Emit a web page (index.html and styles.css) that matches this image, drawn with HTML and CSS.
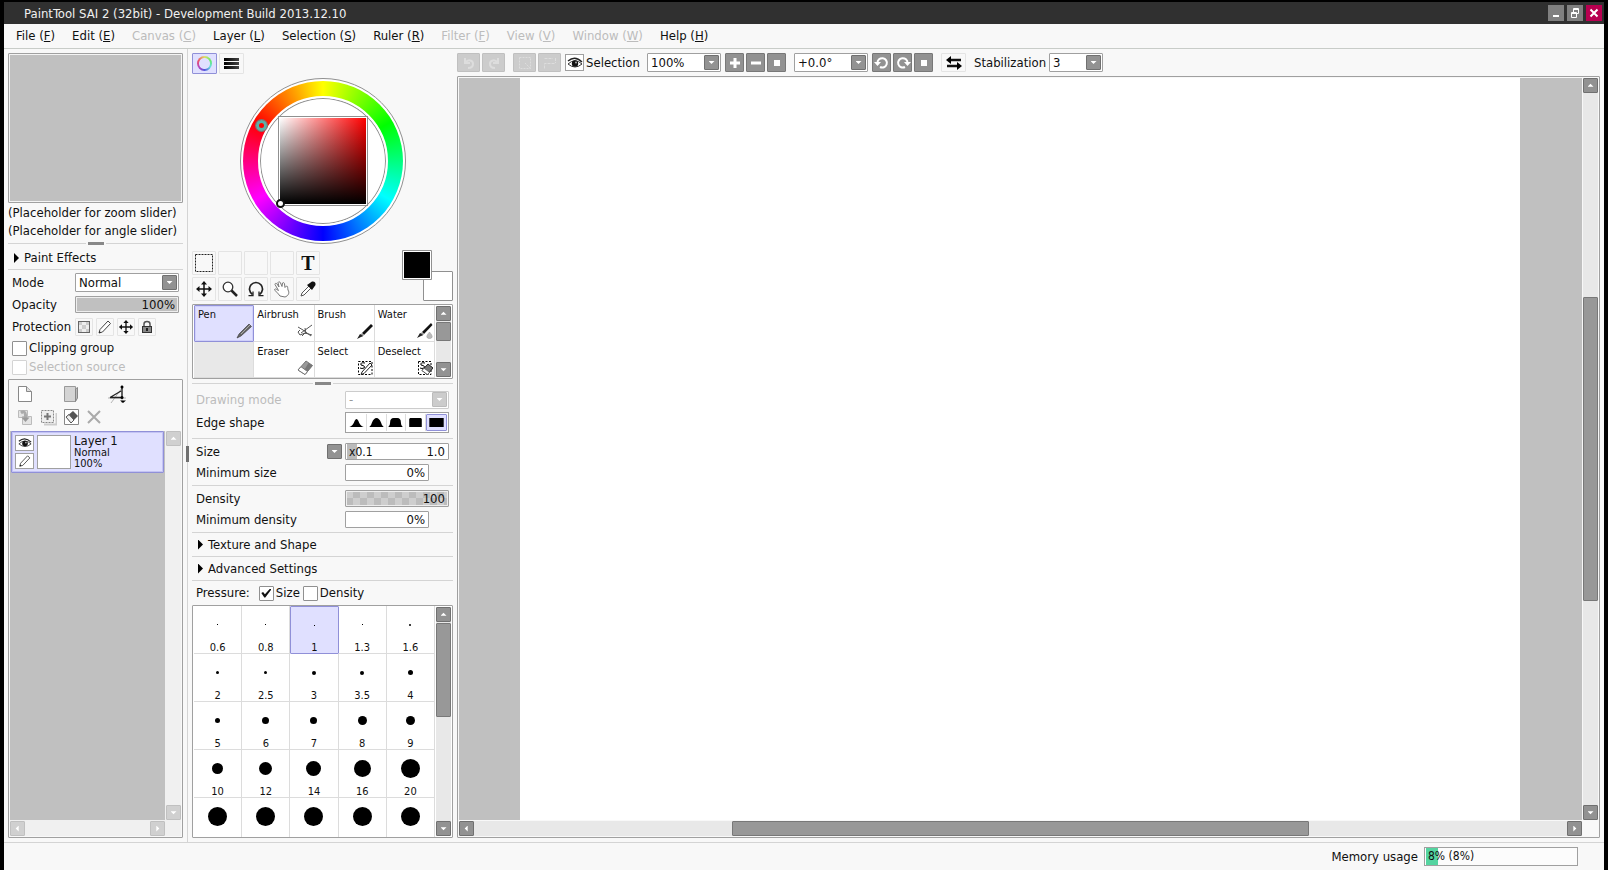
FILE: index.html
```html
<!DOCTYPE html>
<html lang="en">
<head>
<meta charset="utf-8">
<title>PaintTool SAI 2 (32bit) - Development Build 2013.12.10</title>
<link rel="stylesheet" href="styles.css">
</head>
<body>
<svg class="defs" aria-hidden="true">
  <symbol id="eye" viewBox="0 0 16 16"><path d="M1 6Q8 0 15 7" fill="none" stroke="#222" stroke-width="1.4"/><path d="M1 9Q8 2.500 15 9Q8 15 1 9Z" fill="#fff" stroke="#333"/><circle cx="8" cy="8.500" r="3.200" fill="#111"/><circle cx="9" cy="7.500" r="1" fill="#aaa"/></symbol>
  <symbol id="pencil" viewBox="0 0 16 16"><path d="M2 14L3 10.500L11 2L13.500 4.500L5.500 13Z" fill="#fff" stroke="#444"/><path d="M2 14L2.600 12L4 13.400Z" fill="#222"/></symbol>
  <symbol id="move" viewBox="0 0 18 18"><path d="M9 3V15M3 9H15" fill="none" stroke="currentColor" stroke-width="1.500"/><path d="M9 1L12 4.500H6ZM9 17L12 13.500H6ZM1 9L4.500 6V12ZM17 9L13.500 6V12Z" fill="currentColor"/></symbol>
  <symbol id="eraser" viewBox="0 0 16 16"><path d="M1 10L9 1L15.500 5.500L8 14.500Z" fill="#999" stroke="#777"/><path d="M11.500 3L15.500 5.500L8 14.500L5.500 12.800Z" fill="#777"/><path d="M1 10L4 6.700L10.500 11.500L8 14.500Z" fill="#fff" stroke="#777"/></symbol>
</svg>
<div class="window">
  <header class="titlebar">
    <h1 class="title">PaintTool SAI 2 (32bit) - Development Build 2013.12.10</h1>
    <button class="win-btn" aria-label="Minimize"><svg viewBox="0 0 16 16"><path d="M5 11H11" stroke="#fff" stroke-width="2"/></svg></button>
    <button class="win-btn" aria-label="Restore"><svg viewBox="0 0 16 16" fill="none" stroke="#fff"><path d="M6.500 7V3.500H11.500V8.500H9M6 4.500H12M4.500 7.500H9.500V12.500H4.500ZM4 8.500H10"/></svg></button>
    <button class="win-btn win-close" aria-label="Close"><svg viewBox="0 0 16 16"><path d="M4.500 4.500L11.500 11.500M11.500 4.500L4.500 11.500" stroke="#fff" stroke-width="2"/></svg></button>
  </header>
  <nav class="menubar">
    <button>File (<u>F</u>)</button><button>Edit (<u>E</u>)</button><button disabled>Canvas (<u>C</u>)</button><button>Layer (<u>L</u>)</button><button>Selection (<u>S</u>)</button><button>Ruler (<u>R</u>)</button><button disabled>Filter (<u>F</u>)</button><button disabled>View (<u>V</u>)</button><button disabled>Window (<u>W</u>)</button><button>Help (<u>H</u>)</button>
  </nav>

  <main class="workspace">
    <aside class="layers-col">
      <div class="navigator"></div>
      <p class="slot">(Placeholder for zoom slider)</p>
      <p class="slot">(Placeholder for angle slider)</p>
      <div class="splitter"><i class="grip"></i></div>
      <button class="fold"><i class="tri"></i>Paint Effects</button>
      <div class="layer-props">
        <div class="prop">
          <label class="prop-label" for="mode">Mode</label>
          <span class="combo grow"><select id="mode"><option>Normal</option></select><i class="arrow"></i></span>
        </div>
        <div class="prop">
          <label class="prop-label" for="opacity">Opacity</label>
          <input id="opacity" class="field filled grow" value="100%">
        </div>
        <div class="prop protection">
          <span class="prop-label">Protection</span>
          <span class="protect">
            <button class="tile" aria-label="Protect opacity"><svg viewBox="0 0 16 16"><rect x="2.500" y="2.500" width="11" height="11" fill="#eee" stroke="#666"/><path d="M3 3h3v3H3zM10 3h3v3h-3zM6 6h4v4H6zM3 10h3v3H3zM10 10h3v3h-3z" fill="#ccc"/></svg></button>
            <button class="tile" aria-label="Protect drawing"><svg><use href="#pencil"/></svg></button>
            <button class="tile" aria-label="Protect position"><svg><use href="#move"/></svg></button>
            <button class="tile" aria-label="Protect all"><svg viewBox="0 0 16 16"><path d="M5 8V5Q5 2.500 8 2.500Q11 2.500 11 5V8" fill="none" stroke="#555" stroke-width="1.500"/><rect x="3.500" y="7.500" width="9" height="6" fill="#888" stroke="#333"/><path d="M8 9V12" stroke="#222" stroke-width="2"/></svg></button>
          </span>
        </div>
        <label class="check"><input type="checkbox">Clipping group</label>
        <label class="check dim"><input type="checkbox" disabled>Selection source</label>
      </div>
      <section class="layer-panel">
        <div class="layer-tools">
          <button aria-label="New layer"><svg viewBox="0 0 18 18"><path d="M2.500 1.500H10.500L15.500 6.500V16.500H2.500Z" fill="#fff" stroke="#888"/><path d="M10.500 1.500V6.500H15.500" fill="#ddd" stroke="#888"/></svg></button>
          <button aria-label="New folder"><svg viewBox="0 0 18 18"><path d="M2.500 1.500H13.500V16.500H2.500Z" fill="#d4d4d4" stroke="#999"/><path d="M13.500 16.500V4L15.500 2.500V13Z" fill="#bbb" stroke="#888"/></svg></button>
          <button aria-label="New ruler"><svg viewBox="0 0 18 18"><path d="M0 13H18M14 0V18M3 18L14 3" fill="none" stroke="#999" stroke-width=".7"/><path d="M2 12.500H14V2M2 12.500L13 6" fill="none" stroke="#222" stroke-width="1.300"/><circle cx="14" cy="2" r="1.500"/><circle cx="14" cy="12.500" r="1.500"/><path d="M12 15.500H18L15 18Z"/></svg></button>
          <button disabled aria-label="Merge down"><svg viewBox="0 0 18 18"><path d="M2.500 2.500H11.500V9.500H2.500ZM6.500 8.500H15.500V16.500H6.500Z" fill="#e4e4e4" stroke="#bbb"/><path d="M5 5Q9 2 9.500 7V10" fill="none" stroke="#aaa" stroke-width="3"/><path d="M5.500 9.500H13.500L9.500 14Z" fill="#999"/></svg></button>
          <button disabled aria-label="Duplicate layer"><svg viewBox="0 0 18 18"><path d="M5 16.500H17.500V5" fill="none" stroke="#ccc" stroke-width="2"/><path d="M2.500 2.500H14.500V14.500H2.500Z" fill="#eee" stroke="#888" stroke-dasharray="2 1"/><path d="M8.500 5V12M5 8.500H12" stroke="#777" stroke-width="2"/></svg></button>
          <button aria-label="Clear layer"><svg viewBox="0 0 18 18"><path d="M2.500 1.500H16.500V16.500H2.500Z" fill="#fff" stroke="#888"/><path d="M4 9L11 3L16 8L9 15Z" fill="#555"/><path d="M4 9L7 6.500L12 12L9 15Z" fill="#eee" stroke="#555"/></svg></button>
          <button disabled aria-label="Delete layer"><svg viewBox="0 0 18 18"><path d="M3 3L15 15M15 3L3 15" stroke="#aaa" stroke-width="2"/></svg></button>
        </div>
        <div class="scroller">
          <div class="layer-list">
            <article class="layer">
              <div class="layer-flags">
                <button aria-label="Visible"><svg><use href="#eye"/></svg></button>
                <button aria-label="Editable"><svg><use href="#pencil"/></svg></button>
              </div>
              <div class="thumb"></div>
              <div class="layer-text"><b>Layer 1</b><span>Normal</span><span>100%</span></div>
            </article>
          </div>
          <div class="vbar off"><button class="sb up" aria-label="Scroll up"></button><i class="space"></i><button class="sb down" aria-label="Scroll down"></button></div>
          <div class="hbar off"><button class="sb left" aria-label="Scroll left"></button><i class="space"></i><button class="sb right" aria-label="Scroll right"></button></div>
        </div>
      </section>
      <i class="col-grip"></i>
    </aside>

    <section class="tools-col">
      <div class="color-tabs">
        <button class="active" aria-label="Color wheel"><i class="mini-wheel"></i></button>
        <button aria-label="RGB sliders"><i class="mini-bars"></i></button>
      </div>
      <div class="wheel">
        <div class="hues"><div class="hub"><div class="sv"><i class="sv-cursor"></i></div></div></div>
        <i class="hue-cursor"></i>
      </div>
      <div class="tool-row">
        <div class="tools">
          <button class="tile" aria-label="Marquee"><svg viewBox="0 0 18 18"><path d="M.5 .5H17.500V17.500H.5Z" fill="none" stroke="#222" stroke-dasharray="2 1"/></svg></button>
          <button class="tile" disabled></button><button class="tile" disabled></button><button class="tile" disabled></button>
          <button class="tile text-tool">T</button>
          <button class="tile" aria-label="Move"><svg><use href="#move"/></svg></button>
          <button class="tile" aria-label="Zoom"><svg viewBox="0 0 18 18"><circle cx="7" cy="7" r="4.800" fill="#fff" stroke="#333" stroke-width="1.300"/><path d="M10.500 10.500L16 16" stroke="#222" stroke-width="2.500"/></svg></button>
          <button class="tile" aria-label="Rotate"><svg viewBox="0 0 18 18"><path d="M5.500 14.500A6.500 6.500 0 1 1 12.500 14.500" fill="none" stroke="#222" stroke-width="1.700"/><path d="M1.500 15.700H6V11.500M16.500 15.700H12V11.500" fill="none" stroke="#222" stroke-width="1.300"/></svg></button>
          <button class="tile" aria-label="Hand"><svg viewBox="0 0 18 18"><path d="M7 16C5 13 2 11 1.500 9.500C2.500 8 4 10 5.500 10.500L2 4.500C2 3 3.500 3 4 4L6 7L5 2.500C5.500 1.500 7 1.500 7.500 3L9 6.500L9.500 3C10.500 2 11.500 3 11.500 4L12 7.500L13.500 6C15 6 14.500 8 15 10C17 13 15 16 12 17Z" fill="#fff" stroke="#777"/></svg></button>
          <button class="tile" aria-label="Eyedropper"><svg viewBox="0 0 18 18"><path d="M2 16L3 13L10 6L12 8L5 15Z" fill="#fff" stroke="#555"/><path d="M8 5L13 10L14 8.500L16.500 5Q17 1 13 1.500L9.500 4Z" fill="#111"/></svg></button>
        </div>
        <div class="swatches"><button class="swatch back" aria-label="Background color"></button><button class="swatch fore" aria-label="Foreground color"></button></div>
      </div>
      <div class="brushes">
        <div class="brush-grid">
          <button class="active">Pen<svg viewBox="0 0 16 16"><path d="M1 15L3 11L13 1L15.500 3.500L5 13Z" fill="#666" stroke="#333" stroke-width=".6"/><path d="M5 11L14 2" stroke="#aaa"/></svg></button>
          <button>Airbrush<svg viewBox="0 0 16 16" fill="none" stroke="#555"><path d="M15 2L4 10M1 4L6 7L14 13M3 7L1 9L3 12L8 10L15 12M8 5L9 11M5 13L9 9"/></svg></button>
          <button>Brush<svg viewBox="0 0 16 16"><path d="M5 10L14 1L16 3L7 12Z" fill="#111"/><path d="M4 11L6 13" stroke="#999" stroke-width="3"/><path d="M0 16L3 11L6 13Z" fill="#222"/></svg></button>
          <button>Water<svg viewBox="0 0 16 16"><path d="M5 9L14 0L15.500 2L7 11Z" fill="#111"/><path d="M4 10L6 12" stroke="#999" stroke-width="3"/><path d="M0 15L3 10L6 12Z" fill="#222"/><path d="M12.500 9Q16 13 15 14.500Q12.500 17 10 14.500Q9 13 12.500 9Z" fill="#bbb" stroke="#999" stroke-width=".5"/></svg></button>
          <button class="empty" disabled></button>
          <button>Eraser<svg><use href="#eraser"/></svg></button>
          <button>Select<svg viewBox="0 0 16 16"><path d="M1.500 1.500H15V14.500H1.500Z" fill="none" stroke="#000" stroke-dasharray="2 1.500"/><path d="M8 3Q3 2 4 5Q9 6 7 8Q5 9 3 8" fill="none" stroke="#000"/><path d="M4 14.500L5 12L13 3L15 5L7 13.500Z" fill="#fff" stroke="#222"/></svg></button>
          <button>Deselect<svg viewBox="0 0 16 16"><path d="M1.500 1.500H14V14.500H1.500Z" fill="none" stroke="#000" stroke-dasharray="2 1.500"/><path d="M8 3Q3 2 4 5Q9 6 7 8Q5 9 3 8" fill="none" stroke="#000"/><path d="M5 10.500L11 4L16 8L10.500 14.500Z" fill="#777" stroke="#222"/><path d="M5 10.500L7 8.300L12.500 12.200L10.500 14.500Z" fill="#fff" stroke="#444" stroke-width=".6"/></svg></button>
        </div>
        <div class="vbar"><button class="sb up" aria-label="Scroll up"></button><i class="knob short"></i><i class="space"></i><button class="sb down" aria-label="Scroll down"></button></div>
      </div>
      <div class="splitter"><i class="grip"></i></div>

      <div class="settings first">
        <div class="set dim"><label for="dmode">Drawing mode</label><span class="combo wide"><select id="dmode" disabled><option>-</option></select><i class="arrow"></i></span></div>
        <div class="set tall"><span>Edge shape</span>
          <span class="edges">
            <button aria-label="Soft"><svg viewBox="0 0 16 10"><path d="M0 10Q4 9 6 3Q8 -1 10 3Q12 9 16 10Z"/></svg></button>
            <button aria-label="Round"><svg viewBox="0 0 16 10"><path d="M0 10Q2 9 3 5Q5 0 8 0Q11 0 13 5Q14 9 16 10Z"/></svg></button>
            <button aria-label="Firm"><svg viewBox="0 0 16 10"><path d="M0 10Q2 9 2 5Q2 0 6 0H10Q14 0 14 5Q14 9 16 10Z"/></svg></button>
            <button aria-label="Hard"><svg viewBox="0 0 16 10"><path d="M1 10V1L2 0H14L15 1V10Z"/></svg></button>
            <button class="active" aria-label="Flat"><svg viewBox="0 0 16 10"><path d="M0 0H16V10H0Z"/></svg></button>
          </span>
        </div>
      </div>
      <div class="settings">
        <div class="set"><label for="size">Size</label><button class="drop" aria-label="Size unit"><i class="arrow"></i></button><span class="field wide scaled"><small>x0.1</small><input id="size" value="1.0"></span></div>
        <div class="set"><label for="minsize">Minimum size</label><input id="minsize" class="field narrow" value="0%"></div>
      </div>
      <div class="settings">
        <div class="set"><label for="density">Density</label><input id="density" class="field wide checker" value="100"></div>
        <div class="set"><label for="mindens">Minimum density</label><input id="mindens" class="field narrow" value="0%"></div>
      </div>
      <button class="fold"><i class="tri"></i>Texture and Shape</button>
      <button class="fold"><i class="tri"></i>Advanced Settings</button>
      <div class="pressure">
        <span>Pressure:</span>
        <label class="check"><input type="checkbox" checked>Size</label>
        <label class="check"><input type="checkbox">Density</label>
      </div>
      <div class="sizes">
        <div class="size-grid" id="sizes"></div>
        <div class="vbar"><button class="sb up" aria-label="Scroll up"></button><i class="knob third"></i><i class="space"></i><button class="sb down" aria-label="Scroll down"></button></div>
      </div>
    </section>

    <section class="canvas-col">
      <div class="toolbar">
        <div class="group">
          <button class="key big" disabled aria-label="Undo"><svg viewBox="0 0 16 16"><path d="M4 3V8H9M4.500 7.500C7 4 12 5 12 9C12 12 10 13 7 13" fill="none" stroke="#ddd" stroke-width="2"/></svg></button>
          <button class="key big" disabled aria-label="Redo"><svg viewBox="0 0 16 16"><path d="M12 3V8H7M11.500 7.500C9 4 4 5 4 9C4 12 6 13 9 13" fill="none" stroke="#ddd" stroke-width="2"/></svg></button>
        </div>
        <div class="group">
          <button class="key big" disabled aria-label="Deselect"><svg viewBox="0 0 16 16"><path d="M2.500 2.500H13.500V13.500H2.500ZM8 8L14 14" fill="none" stroke="#ddd" stroke-dasharray="2 1"/></svg></button>
          <button class="key big" disabled aria-label="Invert selection"><svg viewBox="0 0 16 16"><path d="M2.500 13.500V8.500H13.500M13.500 3V8M2.500 3.500H11" fill="none" stroke="#ddd" stroke-dasharray="3 1"/></svg></button>
        </div>
        <button class="eye-btn" aria-label="Show selection"><svg><use href="#eye"/></svg></button>
        <span class="eye-label">Selection</span>
        <span class="combo zoom"><select aria-label="Zoom"><option>100%</option></select><i class="arrow"></i></span>
        <div class="group keys">
          <button class="key" aria-label="Zoom in"><svg viewBox="0 0 16 16"><path d="M8 3V13M3 8H13" stroke="#fff" stroke-width="3"/></svg></button>
          <button class="key" aria-label="Zoom out"><svg viewBox="0 0 16 16"><path d="M3 8H13" stroke="#fff" stroke-width="3"/></svg></button>
          <button class="key" aria-label="Reset zoom"><svg viewBox="0 0 16 16"><path d="M5 5H11V11H5Z" fill="#fff"/></svg></button>
        </div>
        <span class="combo zoom"><select aria-label="Angle"><option>+0.0°</option></select><i class="arrow"></i></span>
        <div class="group keys">
          <button class="key" aria-label="Rotate left"><svg viewBox="0 0 16 16"><path d="M3.500 8A4.700 4.700 0 1 1 6 12" fill="none" stroke="#fff" stroke-width="2"/><path d="M0 7H7L3.500 11Z" fill="#fff"/></svg></button>
          <button class="key" aria-label="Rotate right"><svg viewBox="0 0 16 16"><path d="M12.500 8A4.700 4.700 0 1 0 10 12" fill="none" stroke="#fff" stroke-width="2"/><path d="M9 7H16L12.500 11Z" fill="#fff"/></svg></button>
          <button class="key" aria-label="Reset angle"><svg viewBox="0 0 16 16"><path d="M5 5H11V11H5Z" fill="#fff"/></svg></button>
        </div>
        <button class="tile flip" aria-label="Flip"><svg viewBox="0 0 16 14"><path d="M4 4H15M1 10H12" stroke="#111" stroke-width="2.500"/><path d="M5 0V8L0 4ZM11 6V14L16 10Z"/></svg></button>
        <label class="stab" for="stab">Stabilization</label>
        <span class="combo stab-box"><select id="stab"><option>3</option></select><i class="arrow"></i></span>
      </div>
      <div class="scroller view">
        <div class="viewport"><div class="paper"></div></div>
        <div class="vbar"><button class="sb up" aria-label="Scroll up"></button><i class="space v-gap"></i><i class="knob v-knob"></i><i class="space v-gap"></i><button class="sb down" aria-label="Scroll down"></button></div>
        <div class="hbar"><button class="sb left" aria-label="Scroll left"></button><i class="space h-gap"></i><i class="knob h-knob"></i><i class="space h-gap"></i><button class="sb right" aria-label="Scroll right"></button></div>
      </div>
    </section>
  </main>

  <footer class="status">
    <span>Memory usage</span>
    <div class="memory">8% (8%)</div>
  </footer>
</div>
<script src="sizes.js"></script>
</body>
</html>
```

FILE: sizes.js
```js
// Brush size presets: [label, dot diameter in px]
const presets = [
  ["0.6", 1], ["0.8", 1], ["1", 1], ["1.3", 1], ["1.6", 2],
  ["2", 3], ["2.5", 3], ["3", 4], ["3.5", 4], ["4", 5],
  ["5", 5], ["6", 7], ["7", 7], ["8", 9], ["9", 9],
  ["10", 11], ["12", 13], ["14", 15], ["16", 17], ["20", 19],
  ["", 19], ["", 19], ["", 19], ["", 19], ["", 19]
];
const grid = document.getElementById("sizes");
presets.forEach(([label, d]) => {
  const cell = document.createElement("button");
  cell.className = label === "1" ? "size-cell active" : "size-cell";
  const well = document.createElement("span");
  well.className = "well";
  const dot = document.createElement("i");
  dot.className = d < 2 ? "dot pixel" : "dot";
  dot.style.width = d + "px";
  dot.style.height = d + "px";
  well.append(dot);
  cell.append(well, label);
  grid.append(cell);
});
```

FILE: styles.css
```css
:root {
  --bg: #f8f8f8;
  --line: #d4d4d4;
  --edge: #a0a0a0;
  --grey: #c0c0c0;
  --key: #929292;
  --pick: #e0e0ff;
  --pick-edge: #9090d8;
  --track: #e8e8e8;
}
* { box-sizing: border-box; }
body {
  margin: 0;
  background: #000;
  color: #101010;
  font: 13px/16px "DejaVu Sans Condensed", "DejaVu Sans", sans-serif;
}
button, input, select { font: inherit; color: inherit; margin: 0; padding: 0; border: 0; background: none; border-radius: 0; }
p, h1 { margin: 0; font: inherit; }
svg { display: block; width: 16px; height: 16px; }
.defs { position: absolute; width: 0; height: 0; }

.window { height: 100vh; padding: 2px 4px 0; display: flex; flex-direction: column; }
.titlebar { display: flex; align-items: center; gap: 3px; height: 22px; padding: 0 2px 0 20px; background: #303030; color: #f0f0f0; }
.title { flex: 1; padding-top: 1px; }
.win-btn { width: 16px; height: 16px; background: #808080; }
.win-close { background: #b80050; }
.menubar { display: flex; gap: 17px; height: 25px; padding: 0 12px; background: var(--bg); border-bottom: 1px solid #c8ccc8; }
.menubar button:disabled { color: #bcbcbc; }

.workspace { flex: 1; min-height: 0; display: flex; background: var(--bg); border-bottom: 1px solid var(--line); }
.layers-col { position: relative; display: flex; flex-direction: column; width: 184px; padding: 4px; border-right: 1px solid var(--line); }
.col-grip { position: absolute; right: -2px; top: 50%; width: 3px; height: 16px; background: #707070; }
.tools-col { display: flex; flex-direction: column; width: 265px; padding: 4px 0 4px 4px; }
.canvas-col { flex: 1; min-width: 0; display: flex; flex-direction: column; gap: 4px; padding: 4px; }

/* Shared controls */
.splitter { display: flex; align-items: center; justify-content: center; height: 8px; flex: none; background: linear-gradient(var(--line), var(--line)) center / 100% 1px no-repeat; }
.grip { width: 20px; height: 3px; border: solid var(--bg); border-width: 0 2px; background: #888; }
.fold { display: flex; align-items: center; gap: 5px; height: 24px; flex: none; padding: 0 6px; border-bottom: 1px solid var(--line); text-align: left; }
.tri { width: 5px; height: 10px; background: #000; clip-path: polygon(0 0, 100% 50%, 0 100%); }
.field { height: 17px; padding: 0 3px; border: 1px solid var(--edge); border-radius: 1px; background: #fff; text-align: right; }
.grow { flex: 1; min-width: 0; }
.filled { background: var(--grey); box-shadow: inset 0 0 0 1px #eee; }
.combo { display: flex; align-items: center; height: 19px; padding-right: 1px; border: 1px solid var(--edge); border-radius: 1px; background: #fff; }
.combo select { flex: 1; min-width: 0; padding-left: 3px; appearance: none; outline: 0; }
.arrow { width: 15px; height: 15px; flex: none; border: 1px solid #707070; border-radius: 1px; background: var(--key); display: grid; place-items: center; pointer-events: none; }
.arrow::before { content: ""; width: 6px; height: 3px; background: #fff; clip-path: polygon(0 0, 100% 0, 50% 100%); }
.dim { color: #bcbcbc; }
.dim .combo { border-color: #ccc; }
.dim .arrow { background: #ccc; border-color: #bbb; }
.dim select:disabled { opacity: 1; color: #999; }
.check { display: flex; align-items: center; gap: 2px; }
.check input { appearance: none; width: 15px; height: 15px; border: 1px solid #909090; border-radius: 1px; background: #fff; display: grid; place-items: center; }
.check input:checked::before { content: ""; width: 10px; height: 9px; background: #111; clip-path: polygon(0 50%, 18% 40%, 36% 65%, 88% 0, 100% 10%, 40% 100%, 30% 100%); }
.check.dim input { border-color: #d4d4d4; }
.tile { display: grid; place-items: center; border: 1px solid #e4e4e4; border-radius: 1px; }

.vbar, .hbar { display: flex; background: var(--track); }
.vbar { flex-direction: column; width: 15px; }
.hbar { height: 15px; }
.space { flex: 1; }
.knob { background: #989898; border: 1px solid #787878; border-radius: 1px; }
.sb { width: 15px; height: 15px; flex: none; display: grid; place-items: center; border: 1px solid #707070; border-radius: 1px; background: var(--key); }
.sb::before { content: ""; width: 6px; height: 6px; background: #fff; }
.up::before { clip-path: polygon(50% 20%, 100% 70%, 0 70%); }
.down::before { clip-path: polygon(0 30%, 100% 30%, 50% 80%); }
.left::before { clip-path: polygon(70% 0, 70% 100%, 20% 50%); }
.right::before { clip-path: polygon(30% 0, 80% 50%, 30% 100%); }
.off { background: #f0f0f0; }
.off .sb { background: #d0d0d0; border-color: #c0c0c0; }
.scroller { flex: 1; min-height: 0; display: grid; grid-template: minmax(0, 1fr) 15px / minmax(0, 1fr) 15px; gap: 1px; background: #f0f0f0; }

/* Layers column */
.navigator { height: 150px; flex: none; border: 1px solid var(--edge); border-radius: 1px; background: var(--grey); box-shadow: inset 0 0 0 1px #f4f4f4; }
.slot { height: 18px; line-height: 20px; white-space: nowrap; }
.layers-col > .fold { height: 23px; }
.layer-props { display: flex; flex-direction: column; gap: 3px; padding: 3px 4px 4px; }
.prop { display: flex; align-items: center; height: 19px; white-space: nowrap; }
.prop-label { width: 63px; }
.protection { height: 20px; }
.protect { display: flex; gap: 3px; }
.protect .tile { width: 18px; height: 18px; }
.protect svg { width: 16px; height: 16px; }
.layer-panel { flex: 1; min-height: 0; display: flex; flex-direction: column; border: 1px solid var(--edge); border-radius: 1px; padding: 5px 1px 1px; }
.layer-tools { display: grid; grid-template-columns: repeat(4, 23px); row-gap: 5px; padding: 0 6px 5px; }
.layer-tools svg { width: 18px; height: 18px; }
.layer-tools button:nth-child(2) { grid-column: 3; }
.layer-tools button:nth-child(3) { grid-column: 5; }
.layer-list { padding: 0 1px; background: var(--grey); }
.layer { display: flex; align-items: center; gap: 3px; height: 42px; padding: 0 3px; border: 1px solid var(--pick-edge); border-radius: 1px; background: var(--pick); box-shadow: inset 0 0 0 1px #c4c4f4; }
.layer-flags { display: flex; flex-direction: column; gap: 2px; }
.layer-flags button { width: 19px; height: 16px; display: grid; place-items: center; border: 1px solid var(--edge); background: #fff; }
.layer-flags svg { width: 14px; height: 14px; }
.layer-flags button:first-child svg { width: 16px; height: 14px; }
.thumb { width: 34px; height: 34px; border: 1px solid var(--edge); background: #fff; }
.layer-text { display: flex; flex-direction: column; padding-bottom: 2px; font-size: 11px; line-height: 11px; }
.layer-text b { font-weight: normal; font-size: 13px; line-height: 13px; }

/* Tools column */
.color-tabs { display: flex; gap: 2px; }
.color-tabs button { width: 25px; height: 21px; display: grid; place-items: center; border: 1px solid #e4e4e4; border-radius: 1px; }
.color-tabs .active { border-color: var(--pick-edge); background: var(--pick); }
.mini-wheel { width: 15px; height: 15px; border-radius: 50%; background: radial-gradient(var(--pick) 5px, transparent 6px), conic-gradient(#dd6, #6e6, #6dd, #55d, #b4b, #e56, #dd6); }
.mini-bars { width: 15px; height: 11px; background: linear-gradient(transparent 3px, var(--bg) 3px 4px, transparent 4px 7px, var(--bg) 7px 8px, transparent 8px), linear-gradient(90deg, #000, #444); }
.wheel { position: relative; align-self: center; flex: none; display: grid; place-items: center; width: 166px; height: 166px; margin: 4px 0 6px; border: 1px solid #909090; border-radius: 50%; background: #fff; }
.hues { display: grid; place-items: center; width: 160px; height: 160px; border-radius: 50%; background: conic-gradient(#ff0, #0f0, #0ff, #00f, #f0f, #f00, #ff0); }
.hub { display: grid; place-items: center; width: 130px; height: 130px; border: 2px solid #fff; border-radius: 50%; background: #fff; box-shadow: inset 0 0 0 1px #909090; }
.sv { position: relative; width: 90px; height: 90px; padding: 1px; border: 1px solid #909090; background: linear-gradient(transparent, #000) content-box, linear-gradient(90deg, #fff, #f00) content-box, #fff; }
.sv-cursor, .hue-cursor { position: absolute; border-radius: 50%; }
.sv-cursor { left: -3px; bottom: -3px; width: 9px; height: 9px; border: 2px solid #111; background: #fff; }
.hue-cursor { left: 15px; top: 41px; width: 11px; height: 11px; border: 3px solid #5cb0a8; box-shadow: 0 0 0 1px #777; }
.tool-row { display: flex; align-items: end; justify-content: space-between; flex: none; height: 51px; margin-bottom: 3px; }
.tools { display: grid; grid-template: repeat(2, 24px) / repeat(5, 24px); gap: 2px; }
.tools svg { width: 18px; height: 18px; }
.text-tool { font: bold 20px/20px "Liberation Serif", serif; }
.swatches { position: relative; width: 51px; height: 51px; }
.swatch { position: absolute; width: 30px; height: 30px; border: 1px solid #909090; border-radius: 1px; box-shadow: inset 0 0 0 1px #fff; }
.fore { left: 0; top: 0; background: #000; }
.back { right: 0; bottom: 0; background: #fff; }
.brushes, .sizes { display: flex; gap: 1px; border: 1px solid var(--edge); border-radius: 1px; padding: 0 1px; background: #fff; }
.brushes { height: 75px; flex: none; }
.brushes .vbar, .sizes .vbar { gap: 1px; margin: 1px 0; }
.short { height: 19px; }
.third { height: 94px; }
.brush-grid { flex: 1; display: grid; grid-template: repeat(2, 1fr) / repeat(4, minmax(0, 1fr)); }
.brush-grid button { display: grid; grid-template-columns: minmax(0, 1fr) 16px; grid-template-rows: 17px 16px; align-items: end; align-content: start; padding: 1px 1px 0 3px; border: solid #dcdcdc; border-width: 0 1px 1px 0; font-size: 11px; text-align: left; white-space: nowrap; }
.brush-grid svg { grid-column: 2; grid-row: 2; }
.brush-grid .active { border: 1px solid var(--pick-edge); border-radius: 1px; background: var(--pick); padding-top: 0; box-shadow: inset 0 0 0 1px #d0d0fa; }
.brush-grid .empty { background: var(--track); }
.settings { display: flex; flex-direction: column; gap: 4px; flex: none; padding: 4px; border-bottom: 1px solid var(--line); }
.first { padding-bottom: 5px; }
.set { display: flex; align-items: center; gap: 3px; height: 17px; white-space: nowrap; }
.set > :first-child { flex: 1; }
.set .combo { height: 18px; }
.tall { height: 21px; }
.wide { width: 104px; }
.narrow { width: 84px; margin-right: 20px; }
.edges { display: flex; width: 104px; height: 21px; border: 1px solid var(--edge); background: #fff; padding: 1px; }
.edges button { flex: 1; display: grid; place-items: center; border-right: 1px solid #ddd; }
.edges svg { width: 15px; height: 9px; }
.edges .active { border: 1px solid var(--pick-edge); border-radius: 1px; background: var(--pick); }
.scaled { display: flex; align-items: center; background: linear-gradient(90deg, transparent 1px, #bbb 1px 11px, transparent 11px) #fff; }
.scaled small { font-size: 12px; }
.scaled input { flex: 1; min-width: 0; text-align: right; }
.checker { background: repeating-conic-gradient(#bcbcbc 0 25%, #cecece 0 50%) 0 0 / 14px 14px; box-shadow: inset 0 0 0 1px #eee; }
.pressure { display: flex; align-items: center; gap: 3px; height: 24px; flex: none; padding-left: 4px; }
.pressure span { margin-right: 6px; }
.sizes { flex: 1; min-height: 0; }
.size-grid { flex: 1; display: grid; grid-template-columns: repeat(5, minmax(0, 1fr)); grid-auto-rows: 48px; overflow: hidden; }
.size-cell { display: flex; flex-direction: column; align-items: center; border: solid #dcdcdc; border-width: 0 1px 1px 0; font-size: 11px; line-height: 10px; }
.size-cell.active { border: 1px solid var(--pick-edge); border-radius: 1px; background: var(--pick); }
.well { display: grid; place-items: center; height: 37px; flex: none; }
.active .well { height: 36px; }
.dot { border-radius: 50%; background: #000; }
.pixel { border-radius: 0; }

/* Canvas column */
.toolbar { display: flex; align-items: center; height: 19px; flex: none; white-space: nowrap; }
.group { display: flex; gap: 2px; margin-right: 8px; }
.group:nth-child(2) { margin-right: 4px; }
.key { width: 19px; height: 19px; display: grid; place-items: center; border: 1px solid #787878; border-radius: 1px; background: var(--key); }
.big { width: 23px; }
.big:disabled { background: #ccc; border-color: #c0c0c0; }
.eye-btn { width: 19px; height: 17px; display: grid; place-items: center; border: 1px solid var(--edge); background: #fff; }
.eye-label { width: 63px; padding-left: 2px; }
.zoom { width: 74px; margin-right: 4px; }
.flip { width: 25px; height: 19px; margin-right: 8px; }
.flip svg { width: 16px; height: 14px; }
.stab { width: 75px; }
.stab-box { width: 54px; }
.view { border: 1px solid var(--edge); border-radius: 1px; padding: 1px; background: var(--bg); }
.viewport { padding: 0 62px 0 61px; background: var(--grey); }
.paper { height: 100%; background: #fff; }
.v-gap { flex: 205; }
.v-knob { flex: 302; }
.h-gap { flex: 258; }
.h-knob { flex: 577; }

.status { display: flex; align-items: center; justify-content: flex-end; gap: 6px; height: 27px; padding-right: 26px; background: var(--bg); }
.memory { width: 154px; height: 19px; padding-left: 3px; border: 1px solid var(--edge); background: linear-gradient(90deg, transparent 1px, #54d4a0 1px 13px, transparent 13px) #fcfcfc; font-size: 12px; line-height: 17px; }
```
